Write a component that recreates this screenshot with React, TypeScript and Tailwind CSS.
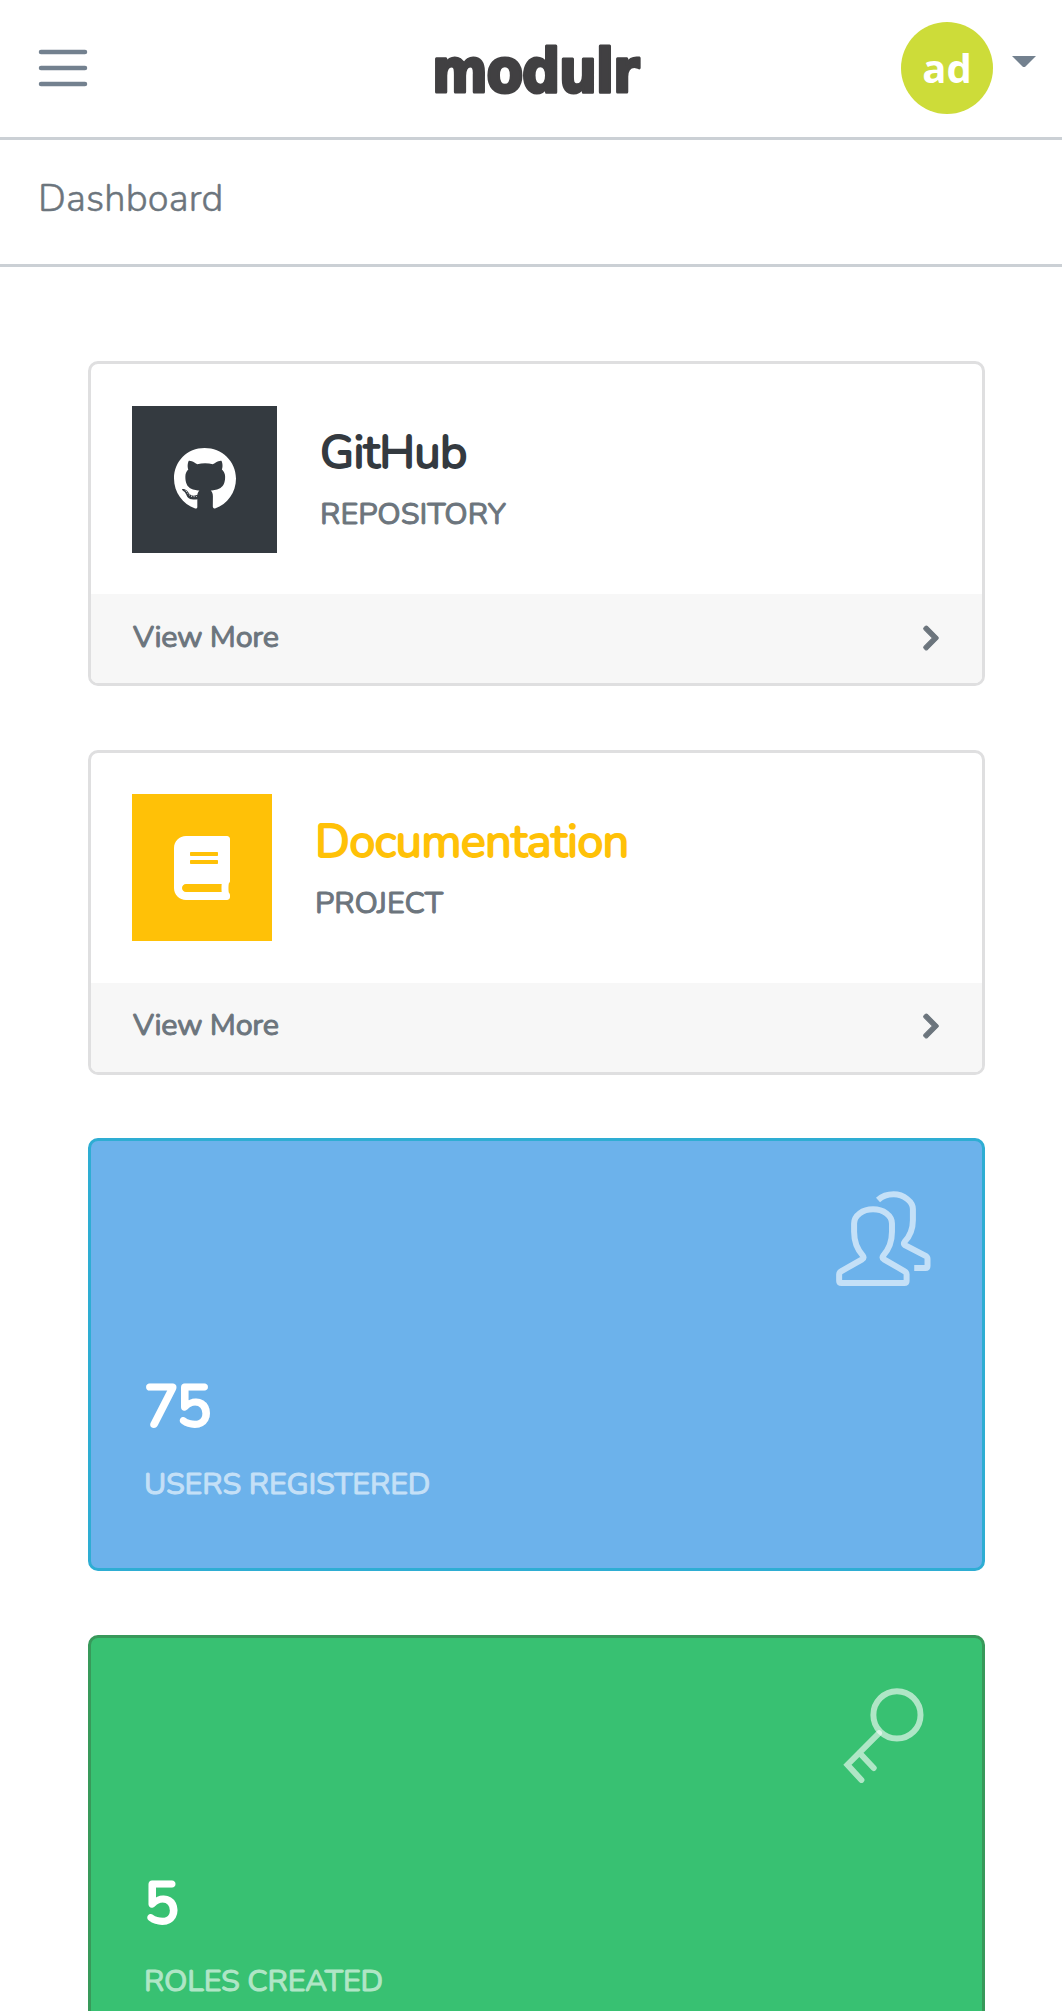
import { FaBook, FaChevronRight, FaGithub } from "react-icons/fa";
import type { ReactNode } from "react";

function Logo() {
  return (
    <svg className="ml-[6px] overflow-visible" width="208" height="80" viewBox="0 0 208 80" aria-label="modulr">
      <text
        x="2"
        y="63.5"
        textLength="206"
        lengthAdjust="spacingAndGlyphs"
        letterSpacing="-1.5"
        fontFamily="'DejaVu Sans', sans-serif"
        fontWeight="700"
        fontSize="61"
        fill="#414042"
        stroke="#414042"
        strokeWidth="3.2"
        strokeLinejoin="round"
      >
        modulr
      </text>
    </svg>
  );
}

function UsersIcon() {
  return (
    <svg
      className="-mr-[2px] h-[95px] w-[95px]"
      viewBox="108 212 285 286"
      fill="none"
      stroke="currentColor"
      strokeWidth="18"
    >
      <path d="M162 310C162 285 188 267 219 267C250 267 276 285 276 310V335C276 370 262 393 250 406Q245 413 252 418L313 453Q320 457 320 463V483Q320 489 313 489H124Q117 489 117 483V463Q117 457 124 453L186 418Q193 413 188 406C175 392 162 370 162 335Z" />
      <path d="M234 239C247 227 262 222 281 222C312 222 339 245 339 266V300C339 330 328 350 314 365Q309 371 315 375L377 407Q383 411 383 416V438Q383 444 377 444H343" />
    </svg>
  );
}

function KeyIcon() {
  return (
    <svg
      className="mr-[5px] h-[95px] w-[81px]"
      viewBox="128 201 243 286"
      fill="none"
      stroke="currentColor"
      strokeWidth="18"
      strokeLinecap="round"
      strokeLinejoin="round"
    >
      <circle cx="290" cy="282" r="71" />
      <path d="M236 337L141 432L183 478M177 396L220 442" strokeLinejoin="miter" />
    </svg>
  );
}

function LinkCard(props: {
  tile: string;
  titleColor: string;
  icon: ReactNode;
  title: string;
  label: string;
}) {
  return (
    <section className="flex h-[325px] flex-col overflow-hidden rounded-[10px] border-[3px] border-[#dfdfe0] bg-white">
      <div className="flex flex-1 items-center gap-[43px] px-[41px]">
        <div className={`flex h-[147px] items-center justify-center text-white ${props.tile}`}>
          {props.icon}
        </div>
        <div className="-mt-[2px] flex flex-col gap-[14px]">
          <h2
            className={`text-[47px] leading-[58px] tracking-[-0.72px] [-webkit-text-stroke:1.8px_currentColor] ${props.titleColor}`}
          >
            {props.title}
          </h2>
          <p className="text-[30.5px] leading-[36px] text-[#6c757d] [-webkit-text-stroke:1px_currentColor]">
            {props.label}
          </p>
        </div>
      </div>
      <footer className="flex h-[89px] items-center justify-between bg-[#f7f7f7] pl-[42px] pr-[42px] text-[#6c757d]">
        <span className="-mt-[3px] text-[30.5px] leading-none tracking-[-0.3px] [-webkit-text-stroke:1px_currentColor]">
          View More
        </span>
        <FaChevronRight className="-mt-[2px] h-[28px] w-[18px] stroke-current stroke-[20]" />
      </footer>
    </section>
  );
}

function StatCard(props: { color: string; icon: ReactNode; value: string; label: string }) {
  return (
    <section className={`flex h-[433px] flex-col rounded-[10px] border-[3px] px-[53px] pt-[50px] ${props.color}`}>
      <div className="flex h-[95px] justify-end text-white/60">{props.icon}</div>
      <div className="mt-[85px] text-[58px] leading-[72px] tracking-[-2.4px] text-white [-webkit-text-stroke:2.8px_currentColor]">
        {props.value}
      </div>
      <div className="mt-[23px] text-[30.5px] leading-9 tracking-[-0.18px] text-white opacity-60 [-webkit-text-stroke:1px_currentColor]">
        {props.label}
      </div>
    </section>
  );
}

export default function App() {
  return (
    <div className="flex h-[2011px] w-full flex-col overflow-hidden bg-white font-['Nunito','Lato',sans-serif]">
      <header className="grid h-[140px] shrink-0 grid-cols-[1fr_auto_1fr] items-center border-b-[3px] border-[#cbd0d5] pb-px">
        <button className="ml-[33px] size-[60px]" aria-label="Menu">
          <svg viewBox="0 0 30 30" fill="none" stroke="#73818f" strokeWidth="2.25" strokeLinecap="round">
            <path d="M4 7h22M4 15h22M4 23h22" />
          </svg>
        </button>
        <Logo />
        <div className="flex items-center justify-end gap-[19px] pr-[26px]">
          <div className="flex size-[92px] items-center justify-center rounded-full bg-[#cddc39] font-['Open_Sans',sans-serif] text-[40px] font-bold leading-none text-white">
            ad
          </div>
          <svg className="mb-[14px] h-[11px] w-6" viewBox="0 0 24 11" fill="#73818f">
            <path d="M0 0H24L13.5 10.4Q12 11.4 10.5 10.4Z" />
          </svg>
        </div>
      </header>
      <nav className="flex h-[127px] shrink-0 items-center border-b-[3px] border-[#cbd0d5] pl-[38px] text-[38px] font-light text-[#6c757d]">
        <span className="-mt-[6px] leading-none tracking-[0.15px] [-webkit-text-stroke:0.5px_currentColor]">
          Dashboard
        </span>
      </nav>
      <main className="flex flex-col gap-[63.5px] pl-[88px] pr-[77px] pt-[94px]">
        <LinkCard
          tile="w-[145px] bg-[#343a40]"
          titleColor="text-[#343a40]"
          icon={<FaGithub className="h-[64px] w-[62px]" />}
          title="GitHub"
          label="REPOSITORY"
        />
        <LinkCard
          tile="w-[140px] bg-[#ffc107]"
          titleColor="text-[#ffc107]"
          icon={<FaBook className="h-[64px] w-[56px]" />}
          title="Documentation"
          label="PROJECT"
        />
        <StatCard
          color="border-[#2eadd3] bg-[#6cb2eb]"
          icon={<UsersIcon />}
          value="75"
          label="USERS REGISTERED"
        />
        <StatCard
          color="border-[#38995a] bg-[#38c172]"
          icon={<KeyIcon />}
          value="5"
          label="ROLES CREATED"
        />
      </main>
    </div>
  );
}
